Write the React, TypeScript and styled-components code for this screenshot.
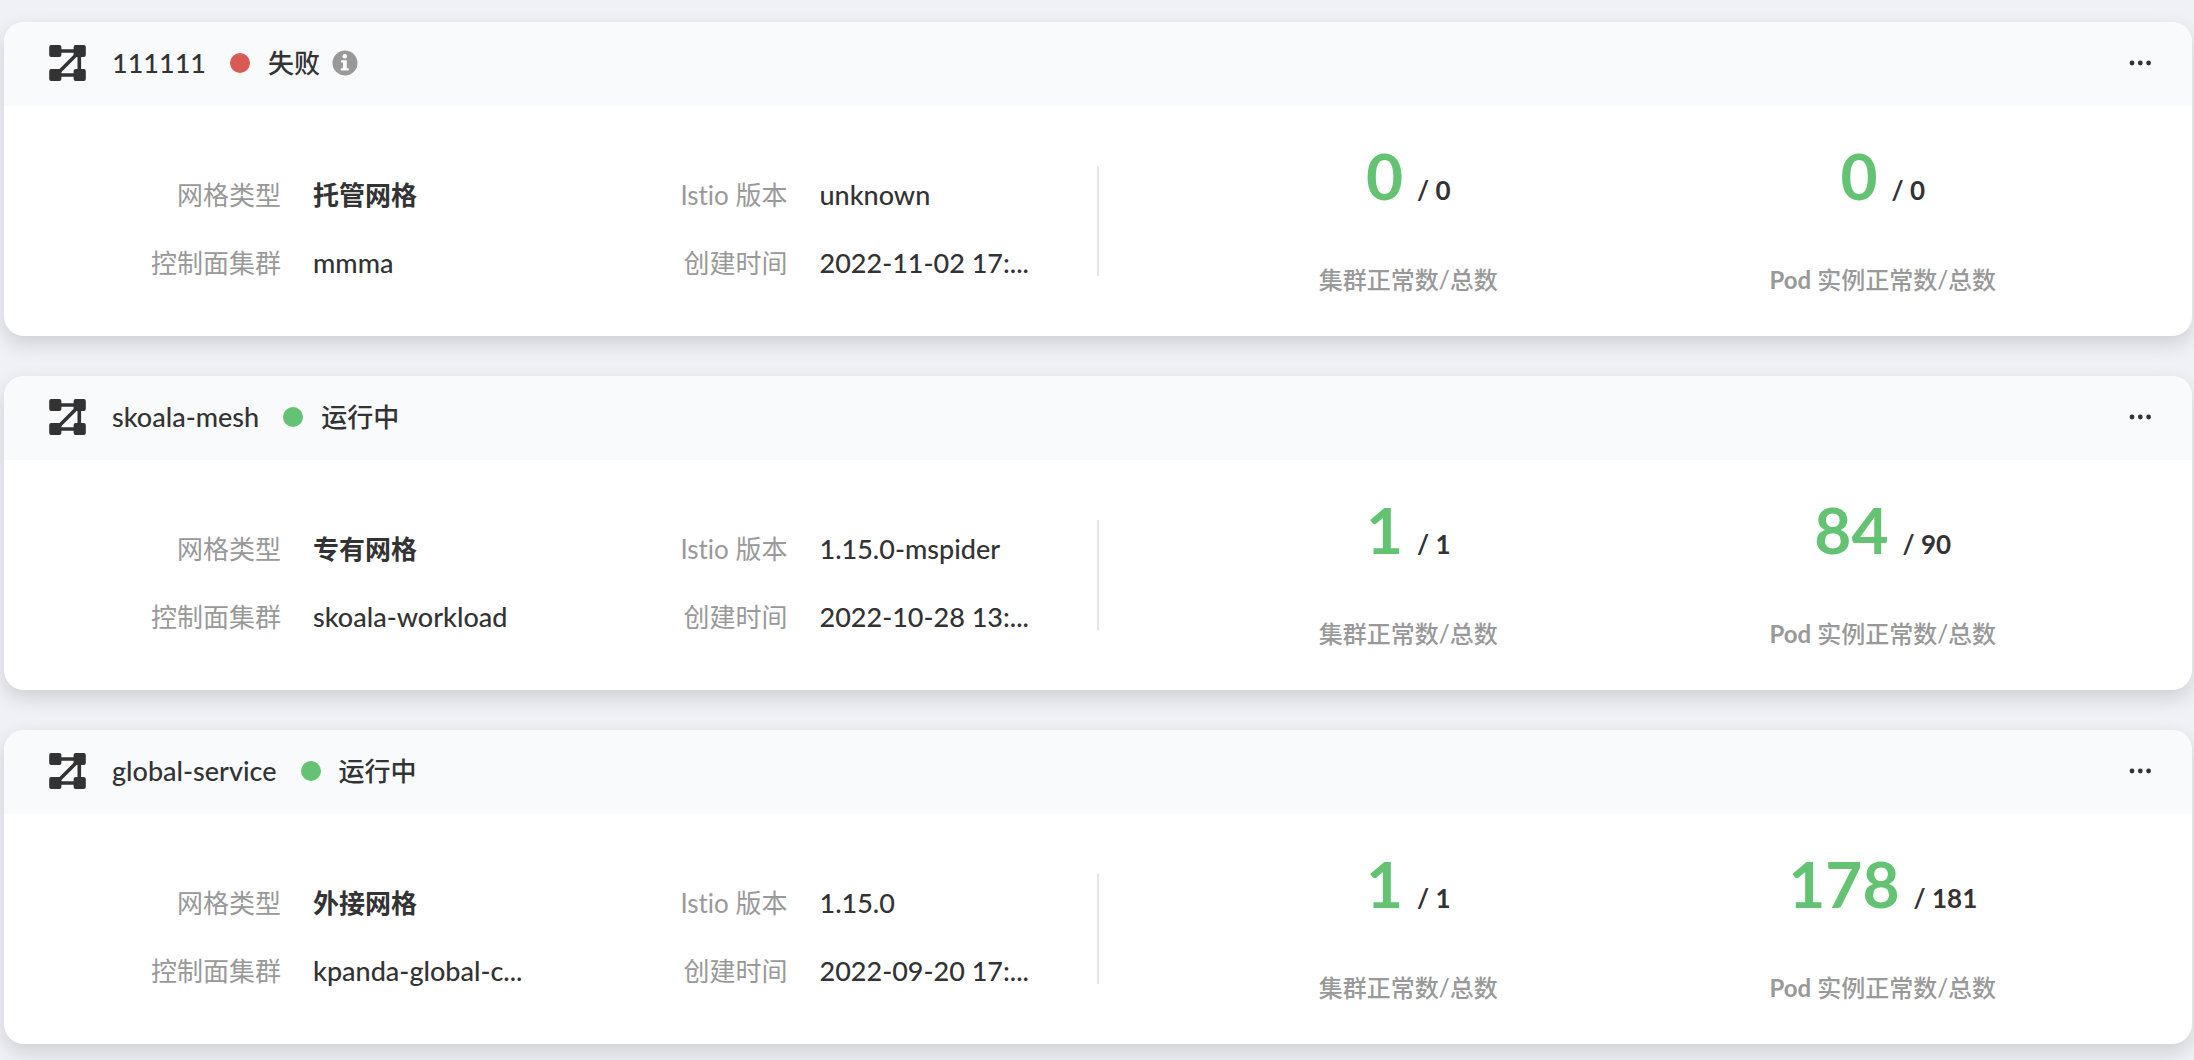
import React from 'react';
import styled, { createGlobalStyle } from 'styled-components';

const GlobalStyle = createGlobalStyle`
  * { box-sizing: border-box; }
  body {
    margin: 0;
    background: #f0f1f6;
    color: #333;
    font-family: Lato, "Noto Sans CJK SC", sans-serif;
    font-size: 26px;
    font-variant-ligatures: none;
    line-height: 36px;
    overflow: hidden;
  }
`;

const List = styled.main`
  display: flex;
  flex-direction: column;
  gap: 40px;
  padding: 22px 2px 16px 4px;
`;

const Card = styled.article`
  border-radius: 20px;
  background: #fff;
  box-shadow: 0 8px 20px rgba(0, 0, 0, 0.14);
`;

const Header = styled.header`
  display: flex;
  align-items: center;
  height: 84px;
  padding: 0 36px 2px 44px;
  border-radius: 20px 20px 0 0;
  background: #f9fafc;
`;

const MeshIcon = styled.svg`
  flex: none;
  width: 38px;
  height: 38px;
`;

const Name = styled.h2`
  margin: 0 24px 0 26px;
  font-size: 27px;
  font-weight: 500;
`;

const Dot = styled.span<{ $color: string }>`
  width: 20px;
  height: 20px;
  margin-right: 18px;
  border-radius: 50%;
  background: ${(p) => p.$color};
`;

const Status = styled.span`
  font-weight: 500;
`;

const PlainButton = styled.button`
  display: flex;
  padding: 0;
  border: 0;
  background: none;
  cursor: pointer;
`;

const InfoButton = styled(PlainButton)`
  margin-left: 12px;
`;

const MoreButton = styled(PlainButton)`
  margin-left: auto;
`;

const Body = styled.div`
  display: grid;
  grid-template-columns: 1fr 2px 1fr;
  align-items: center;
  height: 230px;
`;

const Details = styled.dl`
  display: grid;
  grid-template-columns: 1fr 1fr;
  row-gap: 32px;
  margin: 0;
  padding: 16px 40px 0;
`;

const Detail = styled.div`
  display: grid;
  grid-template-columns: 237px 1fr;
  column-gap: 32px;
  white-space: nowrap;
`;

const Label = styled.dt`
  color: #999;
  font-weight: 400;
  text-align: right;
`;

const Value = styled.dd<{ $strong?: boolean }>`
  margin: 0;
  font-size: ${(p) => (p.$strong ? 26 : 27)}px;
  font-weight: ${(p) => (p.$strong ? 700 : 500)};
`;

const Divider = styled.div`
  height: 110px;
  background: #e4e5ec;
`;

const Stats = styled.div`
  display: grid;
  grid-template-columns: 1fr 1fr;
  padding: 0 72px 8px;
  text-align: center;
`;

const Figures = styled.p`
  margin: 0;
  font-weight: 700;
  line-height: 80px;
`;

const Healthy = styled.span`
  margin-right: 14px;
  color: #63c373;
  font-size: 64px;
`;

const Caption = styled.p`
  margin: 32px 0 0;
  color: #999;
  font-size: 24px;
  font-weight: 500;
`;

const RED = '#d85a53';
const GREEN = '#63c373';

interface Mesh {
  name: string;
  status: string;
  failed?: boolean;
  type: string;
  cluster: string;
  version: string;
  created: string;
  clusters: [number, number];
  pods: [number, number];
}

const meshes: Mesh[] = [
  { name: '111111', status: '失败', failed: true, type: '托管网格', cluster: 'mmma', version: 'unknown', created: '2022-11-02 17:...', clusters: [0, 0], pods: [0, 0] },
  { name: 'skoala-mesh', status: '运行中', type: '专有网格', cluster: 'skoala-workload', version: '1.15.0-mspider', created: '2022-10-28 13:...', clusters: [1, 1], pods: [84, 90] },
  { name: 'global-service', status: '运行中', type: '外接网格', cluster: 'kpanda-global-c...', version: '1.15.0', created: '2022-09-20 17:...', clusters: [1, 1], pods: [178, 181] },
];

function Stat({ value, children }: { value: [number, number]; children: React.ReactNode }) {
  return (
    <div>
      <Figures>
        <Healthy>{value[0]}</Healthy>/ {value[1]}
      </Figures>
      <Caption>{children}</Caption>
    </div>
  );
}

function MeshCard({ mesh }: { mesh: Mesh }) {
  return (
    <Card>
      <Header>
        <MeshIcon viewBox="0 0 38 38" aria-hidden="true">
          <path d="M12 7H26M12 31H26M31.3 12V26M8 31L31 8" fill="none" stroke="#333" strokeWidth="3.6" />
          <g fill="#333">
            <rect x="1.2" y="1" width="12.2" height="12" rx="2" />
            <rect x="25.6" y="1" width="12.2" height="12" rx="2" />
            <rect x="1.2" y="25" width="12.2" height="12" rx="2" />
            <rect x="25.6" y="25" width="12.2" height="12" rx="2" />
          </g>
        </MeshIcon>
        <Name>{mesh.name}</Name>
        <Dot $color={mesh.failed ? RED : GREEN} />
        <Status>{mesh.status}</Status>
        {mesh.failed && (
          <InfoButton aria-label="info">
            <svg width="26" height="26" viewBox="0 0 26 26">
              <circle cx="13" cy="13" r="12.5" fill="#999" />
              <circle cx="12.8" cy="6.3" r="2.3" fill="#fff" />
              <path d="M9 10.2h5.8v8h2v2.4H8.8v-2.4h2.2v-5.6H9z" fill="#fff" />
            </svg>
          </InfoButton>
        )}
        <MoreButton aria-label="more">
          <svg width="32" height="32" viewBox="0 0 32 32" fill="#333">
            <circle cx="8" cy="16" r="2.4" />
            <circle cx="16.3" cy="16" r="2.4" />
            <circle cx="24.6" cy="16" r="2.4" />
          </svg>
        </MoreButton>
      </Header>
      <Body>
        <Details>
          <Detail><Label>网格类型</Label><Value $strong>{mesh.type}</Value></Detail>
          <Detail><Label>Istio 版本</Label><Value>{mesh.version}</Value></Detail>
          <Detail><Label>控制面集群</Label><Value>{mesh.cluster}</Value></Detail>
          <Detail><Label>创建时间</Label><Value>{mesh.created}</Value></Detail>
        </Details>
        <Divider />
        <Stats>
          <Stat value={mesh.clusters}>集群正常数/总数</Stat>
          <Stat value={mesh.pods}><b>Pod</b> 实例正常数/总数</Stat>
        </Stats>
      </Body>
    </Card>
  );
}

export default function App() {
  return (
    <>
      <GlobalStyle />
      <List>
        {meshes.map((mesh) => (
          <MeshCard key={mesh.name} mesh={mesh} />
        ))}
      </List>
    </>
  );
}
